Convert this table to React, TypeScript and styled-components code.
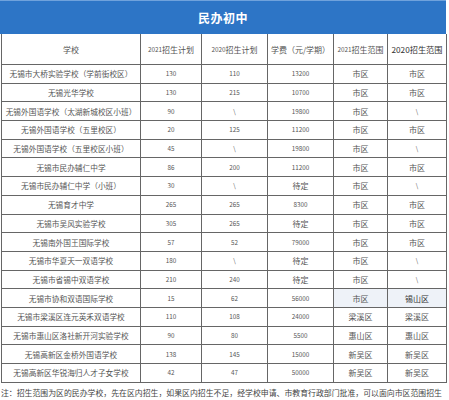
import React from "react"
import styled, { createGlobalStyle } from "styled-components"

const GlobalStyle = createGlobalStyle`
  html, body {
    margin: 0;
    padding: 0;
    background: #fff;
  }
  body {
    font-family: "Noto Sans CJK SC", "Noto Sans", sans-serif;
  }
`

const Page = styled.div`
  width: 449px;
  overflow: hidden;
`

const Banner = styled.div`
  width: 446px;
  height: 34px;
  background: #2d75c6;
  border-top: 1px solid #6fa2dc;
  box-sizing: border-box;
  display: flex;
  align-items: center;
  justify-content: center;
  color: #fff;
  font-size: 12px;
  font-weight: 700;
  letter-spacing: 0.5px;
`

const Grid = styled.div`
  margin-left: 1px;
  width: 445px;
  display: grid;
  grid-template-columns: 139px 61px 66px 66px 54px 59px;
  grid-template-rows: 31px;
  grid-auto-rows: 18.7px;
  border-left: 1px solid #666;
  box-sizing: border-box;
`

type Kind = "name" | "num" | "area" | "head" | "headStrong"

const sizes: Record<Kind, string> = {
  name: "7.7px",
  num: "6.3px",
  area: "8px",
  head: "8px",
  headStrong: "8.2px",
}

const Cell = styled.div<{ $kind: Kind; $shade?: boolean; $strong?: boolean }>`
  display: flex;
  align-items: center;
  justify-content: center;
  border-right: 1px solid #666;
  border-bottom: 1px solid #666;
  box-sizing: border-box;
  white-space: nowrap;
  overflow: hidden;
  color: ${(p) => (p.$strong || p.$kind === "headStrong" ? "#333" : "#555")};
  font-size: ${(p) => sizes[p.$kind]};
  background: ${(p) => (p.$shade ? "#eef2f8" : "#fff")};
`

const Digits = styled.span`
  font-size: 6.4px;
`

const Row = styled.div`
  display: contents;
`

const Note = styled.div`
  width: 449px;
  padding: 4px 0 0 1px;
  font-size: 7.88px;
  color: #444;
  white-space: nowrap;
`

const headers = ["学校", "2021招生计划", "2020招生计划", "学费（元/学期）", "2021招生范围", "2020招生范围"]

const rows: string[][] = [
  ["无锡市大桥实验学校（学前街校区）", "130", "110", "13200", "市区", "市区"],
  ["无锡光华学校", "130", "215", "10700", "市区", "市区"],
  ["无锡外国语学校（太湖新城校区小班）", "90", "\\", "19800", "市区", "\\"],
  ["无锡外国语学校（五里校区）", "20", "125", "11200", "市区", "市区"],
  ["无锡外国语学校（五里校区小班）", "45", "\\", "19800", "市区", "\\"],
  ["无锡市民办辅仁中学", "86", "200", "11200", "市区", "市区"],
  ["无锡市民办辅仁中学（小班）", "30", "\\", "待定", "市区", "\\"],
  ["无锡育才中学", "265", "265", "8300", "市区", "市区"],
  ["无锡市吴风实验学校", "305", "265", "待定", "市区", "市区"],
  ["无锡南外国王国际学校", "57", "52", "79000", "市区", "市区"],
  ["无锡市华夏天一双语学校", "180", "\\", "待定", "市区", "\\"],
  ["无锡市省锡中双语学校", "210", "240", "待定", "市区", "\\"],
  ["无锡市协和双语国际学校", "15", "62", "56000", "市区", "锡山区"],
  ["无锡市梁溪区连元英禾双语学校", "110", "108", "24000", "梁溪区", "梁溪区"],
  ["无锡市惠山区洛社新开河实验学校", "90", "80", "5500", "惠山区", "惠山区"],
  ["无锡高新区金桥外国语学校", "138", "145", "15000", "新吴区", "新吴区"],
  ["无锡高新区华锐海归人才子女学校", "42", "47", "50000", "新吴区", "新吴区"],
]

function HeadText({ text, small }: { text: string; small: boolean }) {
  const m = text.match(/^(\d+)(.*)$/)
  if (!m || !small) return <>{text}</>
  return (
    <>
      <Digits>{m[1]}</Digits>
      {m[2]}
    </>
  )
}

export default function App() {
  return (
    <Page>
      <GlobalStyle />
      <Banner>民办初中</Banner>
      <Grid>
        <Row>
          {headers.map((h, i) => (
            <Cell key={h} $kind={i === 5 ? "headStrong" : "head"}>
              <HeadText text={h} small={i !== 5} />
            </Cell>
          ))}
        </Row>
        {rows.map((r, ri) => (
          <Row key={ri}>
            {r.map((c, ci) => (
              <Cell
                key={ci}
                $kind={ci === 0 ? "name" : /^[0-9\\]+$/.test(c) ? "num" : "area"}
                $shade={ri === 12 && ci >= 4}
                $strong={ri === 12 && ci === 5}
              >
                {c}
              </Cell>
            ))}
          </Row>
        ))}
      </Grid>
      <Note>注：招生范围为区的民办学校，先在区内招生，如果区内招生不足，经学校申请、市教育行政部门批准，可以面向市区范围招生</Note>
    </Page>
  )
}
